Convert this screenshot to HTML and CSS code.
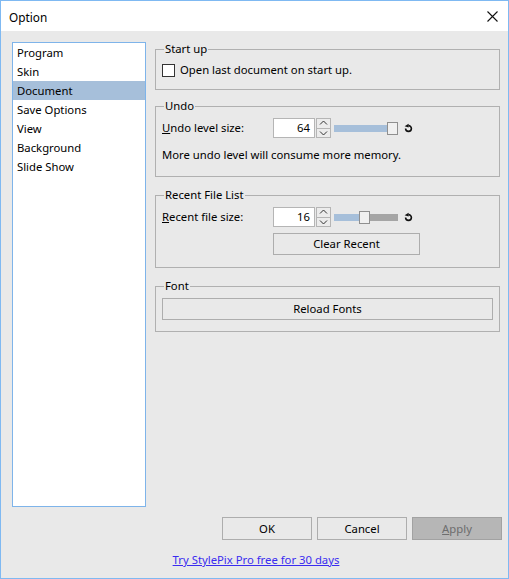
FILE: index.html
```html
<!DOCTYPE html>
<html>
<head>
<meta charset="utf-8">
<title>Option</title>
<link rel="stylesheet" href="styles.css">
</head>
<body>
<div class="window">
  <div class="titlebar">
    <span class="title">Option</span>
    <svg class="close" width="11" height="11" viewBox="0 0 11 11"><path d="M0.5 0.5 L10.5 10.5 M10.5 0.5 L0.5 10.5" stroke="#111" stroke-width="1.1" fill="none"/></svg>
  </div>
  <div class="content">
    <div class="main">
      <ul class="nav">
        <li>Program</li>
        <li>Skin</li>
        <li class="sel">Document</li>
        <li>Save Options</li>
        <li>View</li>
        <li>Background</li>
        <li>Slide Show</li>
      </ul>
      <div class="groups">
        <fieldset class="group g-start">
          <legend>Start up</legend>
          <div class="check"><span class="box"></span><span>Open last document on start up.</span></div>
        </fieldset>
        <fieldset class="group g-undo">
          <legend>Undo</legend>
          <div class="spinrow">
            <span class="label"><u>U</u>ndo level size:</span>
            <span class="spin-input">64</span>
            <span class="spin-btns">
              <span class="spin-btn"><svg width="13" height="8" viewBox="0 0 13 8"><path d="M3 5.5 L6.5 2 L10 5.5" stroke="#333" stroke-width="1" fill="none"/></svg></span>
              <span class="spin-btn"><svg width="13" height="8" viewBox="0 0 13 8"><path d="M3 2.5 L6.5 6 L10 2.5" stroke="#333" stroke-width="1" fill="none"/></svg></span>
            </span>
            <span class="slider">
              <span class="fill" style="width:53px"></span>
              <span class="thumb"></span>
              <span class="rest"></span>
            </span>
            <svg class="reset" width="9" height="9" viewBox="0 0 9 9"><path d="M4.5 1.6 A2.9 2.9 0 1 1 1.6 4.5" stroke="#111" stroke-width="1.6" fill="none"/><polygon points="0.6,2.2 4.6,-0.2 4.6,3.4" fill="#111"/></svg>
          </div>
          <div class="note">More undo level will consume more memory.</div>
        </fieldset>
        <fieldset class="group g-recent">
          <legend>Recent File List</legend>
          <div class="spinrow">
            <span class="label"><u>R</u>ecent file size:</span>
            <span class="spin-input">16</span>
            <span class="spin-btns">
              <span class="spin-btn"><svg width="13" height="8" viewBox="0 0 13 8"><path d="M3 5.5 L6.5 2 L10 5.5" stroke="#333" stroke-width="1" fill="none"/></svg></span>
              <span class="spin-btn"><svg width="13" height="8" viewBox="0 0 13 8"><path d="M3 2.5 L6.5 6 L10 2.5" stroke="#333" stroke-width="1" fill="none"/></svg></span>
            </span>
            <span class="slider">
              <span class="fill" style="width:25px"></span>
              <span class="thumb"></span>
              <span class="rest"></span>
            </span>
            <svg class="reset" width="9" height="9" viewBox="0 0 9 9"><path d="M4.5 1.6 A2.9 2.9 0 1 1 1.6 4.5" stroke="#111" stroke-width="1.6" fill="none"/><polygon points="0.6,2.2 4.6,-0.2 4.6,3.4" fill="#111"/></svg>
          </div>
          <div class="btn clear-btn">Clear Recent</div>
        </fieldset>
        <fieldset class="group g-font">
          <legend>Font</legend>
          <div class="btn reload-btn">Reload Fonts</div>
        </fieldset>
      </div>
    </div>
    <div class="buttons">
      <div class="btn dlg-btn">OK</div>
      <div class="btn dlg-btn">Cancel</div>
      <div class="btn dlg-btn disabled"><u>A</u>pply</div>
    </div>
    <div class="linkrow"><a class="link" href="#">Try StylePix Pro free for 30 days</a></div>
  </div>
</div>
</body>
</html>
```

FILE: styles.css
```css
* { box-sizing: border-box; }
html, body { margin: 0; padding: 0; }
body {
  font-family: "Noto Sans", "Segoe UI", "Liberation Sans", sans-serif;
  font-size: 11.3px;
  line-height: 16px;
  color: #000;
  background: #e9e9e9;
}
.window {
  width: 509px;
  height: 579px;
  border: 1px solid #7fb9f2;
  background: #e9e9e9;
  display: flex;
  flex-direction: column;
}
.titlebar {
  height: 30px;
  flex: none;
  background: #fff;
  display: flex;
  align-items: center;
  justify-content: space-between;
  padding: 0 10px 0 8px;
}
.title { font-size: 11.8px; padding-top: 1px; }
.close { display: block; }
.content {
  flex: 1;
  padding: 10px 8px 0 11px;
  display: flex;
  flex-direction: column;
}
.main {
  display: flex;
  gap: 9px;
  height: 466px;
  flex: none;
}
.nav {
  list-style: none;
  margin: 1px 0 0 0;
  padding: 0;
  width: 134px;
  height: 465px;
  border: 1px solid #7eb4ea;
  background: #fff;
}
.nav li {
  height: 19px;
  line-height: 19px;
  padding-left: 4px;
}
.nav li.sel { background: #a6bfda; }
.groups {
  flex: 1;
  display: flex;
  flex-direction: column;
}
.group {
  margin: 0;
  min-width: 0;
  border: 1px solid #b0b0b0;
  padding: 4px 6px 11px 6px;
}
.group legend {
  padding: 0 1px;
  margin-left: 2px;
  line-height: 16px;
  height: 16px;
}
.g-start { padding-top: 5px; padding-bottom: 11px; margin-bottom: 8px; }
.g-undo { padding-bottom: 13px; margin-bottom: 10px; }
.g-recent { padding-bottom: 12px; margin-bottom: 10px; }
.g-font { padding-bottom: 11px; }
.check {
  display: flex;
  align-items: center;
  height: 16px;
}
.box {
  width: 13px;
  height: 13px;
  border: 1px solid #333;
  background: #fff;
  margin-right: 5px;
}
.spinrow {
  display: flex;
  align-items: center;
  height: 20px;
}
.label { width: 111px; flex: none; }
.spin-input {
  width: 42px;
  height: 20px;
  background: #fff;
  border: 1px solid #b5b5b5;
  text-align: right;
  padding-right: 4px;
  line-height: 18px;
  flex: none;
}
.spin-btns {
  width: 15px;
  height: 20px;
  margin-left: 1px;
  display: flex;
  flex-direction: column;
  flex: none;
}
.spin-btn {
  flex: 1;
  border: 1px solid #b5b5b5;
  display: flex;
  align-items: center;
  justify-content: center;
  background: #ececec;
}
.spin-btn + .spin-btn { border-top: none; }
.slider {
  width: 64px;
  height: 13px;
  margin-left: 3px;
  display: flex;
  align-items: center;
  flex: none;
}
.fill { height: 7px; background: #a6bfda; flex: none; }
.thumb {
  width: 11px;
  height: 13px;
  border: 1px solid #8f8f8f;
  background: #f0f0f0;
  flex: none;
}
.rest { flex: 1; height: 7px; background: #a5a5a5; }
.reset { margin-left: 6px; flex: none; overflow: visible; }
.note { margin-top: 9px; }
.btn {
  border: 1px solid #adadad;
  display: flex;
  align-items: center;
  justify-content: center;
  height: 22px;
}
.clear-btn { width: 147px; margin-left: 111px; margin-top: 6px; }
.reload-btn { width: 100%; }
.buttons {
  display: flex;
  justify-content: flex-end;
  gap: 5px;
  margin-top: 10px;
  margin-right: -2px;
}
.dlg-btn { width: 90px; height: 23px; }
.dlg-btn.disabled {
  background: #b6b6b6;
  border-color: #a2a2a2;
  color: #6d6d6d;
}
.linkrow {
  margin-top: 12px;
  text-align: center;
}
.link { color: #3a2cf0; text-decoration: underline; }
```
